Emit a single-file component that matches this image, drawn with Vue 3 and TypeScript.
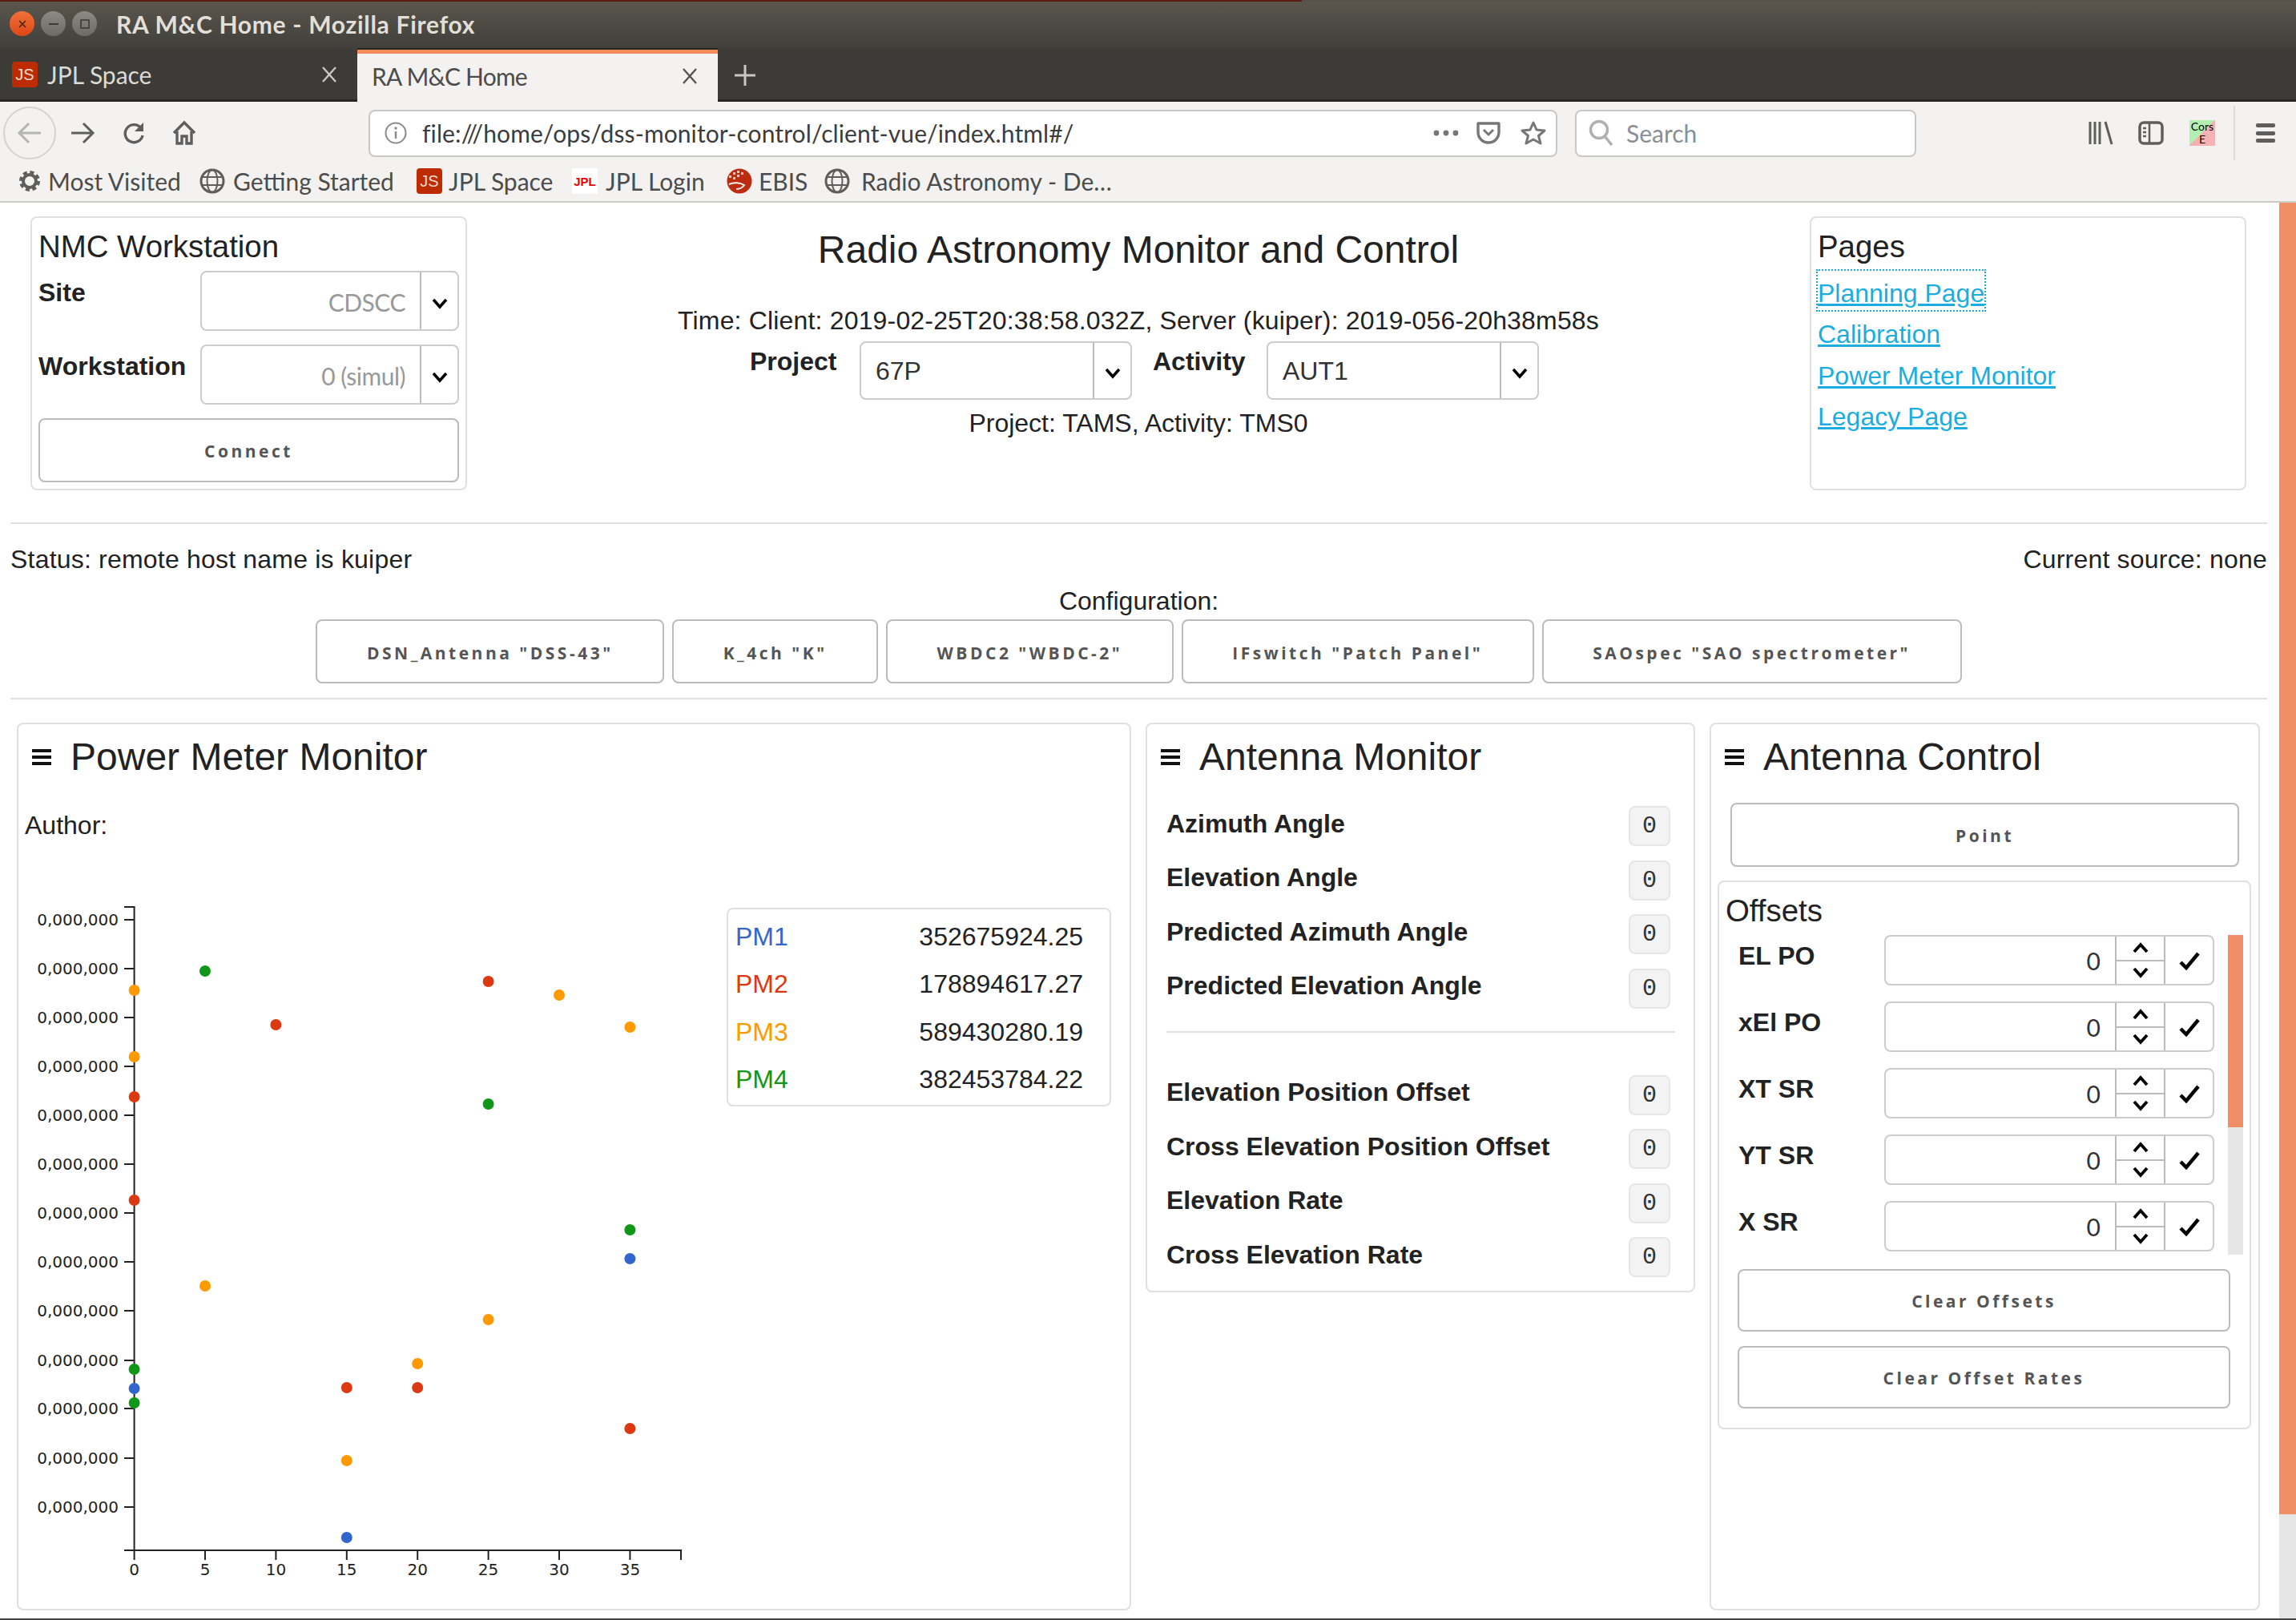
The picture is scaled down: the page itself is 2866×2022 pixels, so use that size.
<script setup lang="ts">
const pages = ['Planning Page', 'Calibration', 'Power Meter Monitor', 'Legacy Page']
const workstationFields = [
  { label: 'Site', value: 'CDSCC' },
  { label: 'Workstation', value: '0 (simul)' },
]
const configs = [
  'DSN_Antenna "DSS-43"',
  'K_4ch "K"',
  'WBDC2 "WBDC-2"',
  'IFswitch "Patch Panel"',
  'SAOspec "SAO spectrometer"',
]
const meters = [
  { name: 'PM1', value: '352675924.25', color: '#3366cc' },
  { name: 'PM2', value: '178894617.27', color: '#dc3912' },
  { name: 'PM3', value: '589430280.19', color: '#ff9900' },
  { name: 'PM4', value: '382453784.22', color: '#109618' },
]
const monitorTop = ['Azimuth Angle', 'Elevation Angle', 'Predicted Azimuth Angle', 'Predicted Elevation Angle']
const monitorBottom = ['Elevation Position Offset', 'Cross Elevation Position Offset', 'Elevation Rate', 'Cross Elevation Rate']
const offsets = ['EL PO', 'xEl PO', 'XT SR', 'YT SR', 'X SR']

// chart is drawn in page coordinates, the svg viewBox shifts them into place
const xPos = (v: number) => 167.6 + v * 17.68
const yTicks = [1148, 1209, 1270, 1331, 1392, 1453, 1514, 1575, 1636, 1698, 1758, 1820, 1881]
const xTicks = [0, 5, 10, 15, 20, 25, 30, 35]
const blue = '#3366cc'
const red = '#dc3912'
const orange = '#ff9900'
const green = '#109618'
const points: [number, number, string][] = [
  [0, 1236, orange], [0, 1319, orange], [0, 1369, red], [0, 1498, red],
  [0, 1709, green], [0, 1733, blue], [0, 1751, green],
  [5, 1212, green], [5, 1605, orange], [10, 1279, red],
  [15, 1732, red], [15, 1823, orange], [15, 1919, blue],
  [20, 1702, orange], [20, 1732, red],
  [25, 1225, red], [25, 1378, green], [25, 1647, orange],
  [30, 1242, orange],
  [35, 1282, orange], [35, 1535, green], [35, 1571, blue], [35, 1783, red],
]
</script>

<template>
  <div class="window">
    <div class="titlebar">
      <span class="wbtn close">
        <svg width="12" height="12" viewBox="0 0 12 12"><path d="M2 2l8 8M10 2l-8 8" stroke="#4a2412" stroke-width="1.6" /></svg>
      </span>
      <span class="wbtn">
        <svg width="14" height="4" viewBox="0 0 14 4"><path d="M1 2h12" stroke="#3c3b37" stroke-width="2" /></svg>
      </span>
      <span class="wbtn">
        <svg width="12" height="12" viewBox="0 0 12 12"><rect x="1" y="1" width="10" height="10" fill="none" stroke="#3c3b37" stroke-width="1.6" /></svg>
      </span>
      <span class="wintitle">RA M&amp;C Home - Mozilla Firefox</span>
    </div>

    <div class="tabs">
      <div class="tab">
        <span class="favicon js">JS</span>
        <span class="tabname">JPL Space</span>
        <svg class="tabx" width="20" height="20" viewBox="0 0 20 20"><path d="M2 1l16 18M18 1L2 19" stroke="#c9c8c4" stroke-width="2.400" /></svg>
      </div>
      <div class="tab active">
        <span class="tabname">RA M&amp;C Home</span>
        <svg class="tabx" width="20" height="20" viewBox="0 0 20 20"><path d="M2 1l16 18M18 1L2 19" stroke="#555" stroke-width="2.400" /></svg>
      </div>
      <svg class="newtab" width="28" height="28" viewBox="0 0 28 28"><path d="M14 1v26M1 14h26" stroke="#c9c8c4" stroke-width="3" /></svg>
    </div>

    <div class="toolbar">
      <span class="backbtn">
        <svg width="32" height="28" viewBox="0 0 32 28"><path d="M30 14H4M15 2L3 14l12 12" fill="none" stroke="#b5b5b5" stroke-width="3" /></svg>
      </span>
      <svg class="forward" width="32" height="28" viewBox="0 0 32 28"><path d="M2 14h26M17 2l12 12-12 12" fill="none" stroke="#5e5e5e" stroke-width="3" /></svg>
      <svg class="reload" width="30" height="30" viewBox="0 0 30 30"><path d="M24 9a11 11 0 1 0 2 9" fill="none" stroke="#5e5e5e" stroke-width="3.400" /><path d="M27 2v11H16z" fill="#5e5e5e" /></svg>
      <svg class="home" width="32" height="32" viewBox="0 0 32 32"><path d="M3 16L16 3l13 13M7 14v15h6v-9h6v9h6V14" fill="none" stroke="#5e5e5e" stroke-width="3.400" /></svg>
      <div class="urlbar">
        <svg width="30" height="30" viewBox="0 0 30 30"><circle cx="15" cy="15" r="12.5" fill="none" stroke="#8a8a8a" stroke-width="2" /><path d="M15 13v9" stroke="#8a8a8a" stroke-width="2.5" /><circle cx="15" cy="9" r="1.7" fill="#8a8a8a" /></svg>
        <span class="url">file:///home/ops/dss-monitor-control/client-vue/index.html#/</span>
        <svg class="dots" width="32" height="8" viewBox="0 0 32 8"><circle cx="4" cy="4" r="3.4" fill="#777" /><circle cx="16" cy="4" r="3.4" fill="#777" /><circle cx="28" cy="4" r="3.4" fill="#777" /></svg>
        <svg class="pocket" width="32" height="30" viewBox="0 0 32 30"><path d="M3 3h26v11a13 13 0 0 1-26 0z" fill="none" stroke="#777" stroke-width="3.4" stroke-linejoin="round" /><path d="M10 11l6 6 6-6" fill="none" stroke="#777" stroke-width="3" /></svg>
        <svg class="star" width="32" height="32" viewBox="0 0 32 32"><path d="M16 3l4 9 10 1-7.500 6.500L25 29l-9-5-9 5 2.500-9.500L2 13l10-1z" fill="none" stroke="#777" stroke-width="3" stroke-linejoin="round" /></svg>
      </div>
      <div class="searchbar">
        <svg width="34" height="34" viewBox="0 0 34 34"><circle cx="14" cy="13" r="10.500" fill="none" stroke="#b0b0b0" stroke-width="3.500" /><path d="M21 21l9 11" stroke="#b0b0b0" stroke-width="3.500" /></svg>
        <span class="searchtext">Search</span>
      </div>
      <svg class="library" width="32" height="30" viewBox="0 0 32 30"><path d="M3 1v28M9 1v28M15 1v28M22 1l8 28" stroke="#5e5e5e" stroke-width="3" fill="none" /></svg>
      <svg class="sidebar" width="32" height="30" viewBox="0 0 32 30"><rect x="2" y="2" width="28" height="26" rx="5" fill="none" stroke="#5e5e5e" stroke-width="3.500" /><path d="M14 2v26M6 9h4M6 14h4M6 19h4" stroke="#5e5e5e" stroke-width="2.500" /></svg>
      <div class="cors"><span>Cors</span><span>E</span></div>
      <span class="tbsep" />
      <span class="burger">
        <i /><i /><i />
      </span>
    </div>

    <div class="bookmarks">
      <div class="bm">
        <svg width="26" height="30" viewBox="0 0 26 26"><circle cx="13" cy="13" r="8" fill="none" stroke="#5e5e5e" stroke-width="4" /><circle cx="13" cy="13" r="11" fill="none" stroke="#5e5e5e" stroke-width="4" stroke-dasharray="5 3.640" /></svg>
        <span>Most Visited</span>
      </div>
      <div class="bm">
        <svg width="32" height="32" viewBox="0 0 32 32"><circle cx="16" cy="16" r="14" fill="none" stroke="#5e5e5e" stroke-width="3" /><ellipse cx="16" cy="16" rx="6.500" ry="14" fill="none" stroke="#5e5e5e" stroke-width="2" /><path d="M2 11h28M2 21h28" stroke="#5e5e5e" stroke-width="2" /></svg>
        <span>Getting Started</span>
      </div>
      <div class="bm">
        <span class="favicon js">JS</span>
        <span class="bmjs">JPL Space</span>
      </div>
      <div class="bm">
        <span class="favicon jpl">JPL</span>
        <span>JPL Login</span>
      </div>
      <div class="bm">
        <svg width="32" height="32" viewBox="0 0 32 32"><circle cx="16" cy="16" r="15.500" fill="#bb2c10" /><path d="M3 9h3v3H3zM8 5h3v3H8zM13 3h3v3h-3zM8 11h3v3H8zM13 8h3v3h-3zM18 5h3v3h-3z" fill="#efc4b8" /><path d="M3 20c6-3 14-2 19 1-2 3-6 5-10 5" fill="none" stroke="#f3f2f0" stroke-width="2" /></svg>
        <span class="bmebis">EBIS</span>
      </div>
      <div class="bm">
        <svg width="32" height="32" viewBox="0 0 32 32"><circle cx="16" cy="16" r="14" fill="none" stroke="#5e5e5e" stroke-width="3" /><ellipse cx="16" cy="16" rx="6.500" ry="14" fill="none" stroke="#5e5e5e" stroke-width="2" /><path d="M2 11h28M2 21h28" stroke="#5e5e5e" stroke-width="2" /></svg>
        <span class="bmlast">Radio Astronomy - De…</span>
      </div>
    </div>

    <div class="page">
      <div class="content">
        <div class="toprow">
          <div class="card nmc">
            <h4 class="cardhead">NMC Workstation</h4>
            <div v-for="f in workstationFields" :key="f.label" class="field">
              <label>{{ f.label }}</label>
              <div class="select">
                <span class="selectval right">{{ f.value }}</span>
                <span class="selectarrow">
                  <svg width="20" height="14" viewBox="0 0 20 14"><path d="M2 2l8 9 8-9" fill="none" stroke="#000" stroke-width="3.500" /></svg>
                </span>
              </div>
            </div>
            <button class="btn connect">Connect</button>
          </div>

          <div class="center">
            <h2 class="maintitle">Radio Astronomy Monitor and Control</h2>
            <p class="timeline">Time: Client: 2019-02-25T20:38:58.032Z, Server (kuiper): 2019-056-20h38m58s</p>
            <div class="projrow">
              <label class="projlabel">Project</label>
              <div class="select proj">
                <span class="selectval">67P</span>
                <span class="selectarrow">
                  <svg width="20" height="14" viewBox="0 0 20 14"><path d="M2 2l8 9 8-9" fill="none" stroke="#000" stroke-width="3.500" /></svg>
                </span>
              </div>
              <label class="projlabel act">Activity</label>
              <div class="select proj">
                <span class="selectval">AUT1</span>
                <span class="selectarrow">
                  <svg width="20" height="14" viewBox="0 0 20 14"><path d="M2 2l8 9 8-9" fill="none" stroke="#000" stroke-width="3.500" /></svg>
                </span>
              </div>
            </div>
            <p class="projline">Project: TAMS, Activity: TMS0</p>
          </div>

          <div class="card pages">
            <h4 class="cardhead">Pages</h4>
            <div v-for="(p, i) in pages" :key="p" class="linkrow">
              <a href="#" :class="{ focused: i === 0 }">{{ p }}</a>
            </div>
          </div>
        </div>

        <div class="rule" />

        <div class="statusrow">
          <span>Status: remote host name is kuiper</span>
          <span>Current source: none</span>
        </div>
        <div class="configlabel">Configuration:</div>
        <div class="configrow">
          <button v-for="c in configs" :key="c" class="btn cfg">{{ c }}</button>
        </div>

        <div class="rule second" />

        <div class="panels">
          <section class="card panel power">
            <header class="panelhead">
              <span class="ham"><i /><i /><i /></span>
              <h3>Power Meter Monitor</h3>
            </header>
            <div class="author">Author:</div>
            <div class="chartrow">
              <svg class="chart" width="880" height="870" viewBox="23 1120 880 870">
                <path d="M155 1132H167.600V1935M155 1935H850V1947" fill="none" stroke="#222" stroke-width="2" />
                <g v-for="t in yTicks" :key="t">
                  <path :d="`M155 ${t}H167`" stroke="#222" stroke-width="2" />
                  <text class="tick" x="148" :y="t + 7" text-anchor="end">0,000,000</text>
                </g>
                <g v-for="t in xTicks" :key="t">
                  <path :d="`M${xPos(t)} 1935V1947`" stroke="#222" stroke-width="2" />
                  <text class="tick" :x="xPos(t)" y="1966" text-anchor="middle">{{ t }}</text>
                </g>
                <circle v-for="(p, i) in points" :key="i" :cx="xPos(p[0])" :cy="p[1]" r="7" :fill="p[2]" />
              </svg>
              <div class="card legend">
                <div v-for="m in meters" :key="m.name" class="legendrow">
                  <span :style="{ color: m.color }">{{ m.name }}</span>
                  <span>{{ m.value }}</span>
                </div>
              </div>
            </div>
          </section>

          <section class="card panel monitor">
            <header class="panelhead">
              <span class="ham"><i /><i /><i /></span>
              <h3>Antenna Monitor</h3>
            </header>
            <div class="monlist">
              <div v-for="m in monitorTop" :key="m" class="monrow">
                <strong>{{ m }}</strong>
                <code>0</code>
              </div>
            </div>
            <div class="monrule" />
            <div class="monlist">
              <div v-for="m in monitorBottom" :key="m" class="monrow">
                <strong>{{ m }}</strong>
                <code>0</code>
              </div>
            </div>
          </section>

          <section class="card panel control">
            <header class="panelhead">
              <span class="ham"><i /><i /><i /></span>
              <h3>Antenna Control</h3>
            </header>
            <button class="btn point">Point</button>
            <div class="card offsets">
              <h4 class="cardhead">Offsets</h4>
              <div class="offsetscroll">
                <div class="offsetlist">
                  <div v-for="o in offsets" :key="o" class="offsetrow">
                    <label>{{ o }}</label>
                    <div class="spin">
                      <span class="spinval">0</span>
                      <span class="spinbtns">
                        <span>
                          <svg width="20" height="14" viewBox="0 0 20 14"><path d="M2 12l8-9 8 9" fill="none" stroke="#000" stroke-width="3.800" /></svg>
                        </span>
                        <span>
                          <svg width="20" height="14" viewBox="0 0 20 14"><path d="M2 2l8 9 8-9" fill="none" stroke="#000" stroke-width="3.800" /></svg>
                        </span>
                      </span>
                      <span class="spincheck">
                        <svg width="26" height="24" viewBox="0 0 26 24"><path d="M2 14l7 7L24 3" fill="none" stroke="#000" stroke-width="4.500" /></svg>
                      </span>
                    </div>
                  </div>
                </div>
                <div class="innerbar"><div class="innerthumb" /></div>
              </div>
              <button class="btn clear">Clear Offsets</button>
              <button class="btn clear">Clear Offset Rates</button>
            </div>
          </section>
        </div>
      </div>
      <div class="pagebar"><div class="pagethumb" /></div>
    </div>
  </div>
</template>

<style>
html, body { margin: 0; background: #fff; }
</style>

<style scoped>
.window {
  width: 2866px;
  height: 2022px;
  overflow: hidden;
  font-family: "Liberation Sans", Arial, sans-serif;
  font-size: 32px;
  color: #222;
  background: #3c3b37;
  display: flex;
  flex-direction: column;
}
.titlebar {
  height: 62px;
  flex: none;
  display: flex;
  align-items: center;
  padding: 0 0 3px 12px;
  box-sizing: border-box;
  background:
    linear-gradient(to right, #5c1a14 1625px, #55534b 1625px) 0 0 / 100% 2px no-repeat,
    linear-gradient(#5b574e, #3f3e39);
  font-family: Lato, "Noto Sans", sans-serif;
}
.wbtn {
  width: 31px;
  height: 31px;
  border-radius: 50%;
  margin-right: 8px;
  background: linear-gradient(#8b8a83, #6c6b64);
  display: flex;
  align-items: center;
  justify-content: center;
}
.wbtn.close { background: linear-gradient(#f2703a, #dd4814); }
.wintitle {
  margin-left: 16px;
  font-weight: 700;
  font-size: 30px;
  letter-spacing: 0.700px;
  color: #e2dfd9;
}
.tabs {
  height: 65px;
  flex: none;
  display: flex;
  box-sizing: border-box;
  border-bottom: 3px solid #262522;
  font-family: Lato, "Noto Sans", sans-serif;
}
.tab {
  width: 446px;
  display: flex;
  align-items: center;
  padding: 0 25px 0 15px;
  box-sizing: border-box;
  font-size: 30px;
  color: #dcdad5;
}
.tab.active {
  width: 450px;
  height: 65px;
  padding: 0 25px 5px 18px;
  background: #f3f2f0;
  border-top: 5px solid #f28a5c;
  color: #4c4c4c;
  letter-spacing: -0.800px;
  box-shadow: 0 -2px 0 #262522;
  z-index: 1;
}
.tabname { flex: 1; margin-left: 12px; }
.tab.active .tabname { margin-left: 0; }
.newtab { margin: 18px 0 0 20px; }
.favicon {
  width: 32px;
  height: 32px;
  flex: none;
  display: flex;
  align-items: center;
  justify-content: center;
}
.favicon.js {
  background: #bd2c00;
  border-radius: 4px;
  color: #f3d9cf;
  font: 20px "Liberation Sans", sans-serif;
}
.favicon.jpl {
  background: #fff;
  color: #f00000;
  font: 700 15px "Liberation Sans", sans-serif;
}
.toolbar {
  height: 78px;
  flex: none;
  display: flex;
  align-items: center;
  box-sizing: border-box;
  background: #f3f2f0;
  font-family: Lato, "Noto Sans", sans-serif;
}
.backbtn {
  width: 66px;
  height: 66px;
  margin-left: 4px;
  border: 2px solid #d4d3d0;
  border-radius: 50%;
  box-sizing: border-box;
  display: flex;
  align-items: center;
  justify-content: center;
}
.forward { margin-left: 17px; }
.reload { margin-left: 33px; }
.home { margin-left: 32px; }
.urlbar {
  margin-left: 214px;
  width: 1484px;
  height: 59px;
  box-sizing: border-box;
  background: #fff;
  border: 2px solid #c9c8c4;
  border-radius: 8px;
  display: flex;
  align-items: center;
  padding: 0 12px 0 17px;
}
.url {
  flex: 1;
  margin-left: 18px;
  font-size: 30px;
  letter-spacing: 0.100px;
  color: #3c3c3c;
}
.pocket { margin-left: 21px; }
.star { margin-left: 24px; }
.searchbar {
  margin-left: 22px;
  width: 426px;
  height: 59px;
  box-sizing: border-box;
  background: #fff;
  border: 2px solid #c9c8c4;
  border-radius: 8px;
  display: flex;
  align-items: center;
  padding-left: 14px;
}
.searchtext {
  margin-left: 14px;
  font-size: 30px;
  color: #8a8f96;
}
.library { margin-left: 214px; }
.sidebar { margin-left: 31px; }
.cors {
  margin-left: 32px;
  width: 32px;
  height: 32px;
  display: flex;
  flex-direction: column;
  align-items: center;
  font-size: 14px;
  line-height: 16px;
  color: #000;
  background: linear-gradient(135deg, #b2f0b2 50%, #f6b2b2 50%);
}
.tbsep {
  margin-left: 23px;
  width: 2px;
  height: 68px;
  background: #dcdbd8;
}
.burger {
  margin-left: 26px;
  width: 24px;
  display: flex;
  flex-direction: column;
  gap: 4.500px;
}
.burger i {
  height: 5px;
  border-radius: 2px;
  background: #5e5e5e;
}
.bookmarks {
  height: 48px;
  flex: none;
  box-sizing: border-box;
  padding: 0 0 4px 24px;
  background: #f3f2f0;
  border-bottom: 2px solid #cccbc8;
  display: grid;
  grid-template-columns: 225px 271px 194px 193px 122px auto;
  align-items: center;
  font-family: Lato, "Noto Sans", sans-serif;
  font-size: 30px;
  color: #4c4c4c;
}
.bm {
  display: flex;
  align-items: center;
  gap: 10px;
  white-space: nowrap;
}
.bmjs { margin-left: -2px; }
.bmebis { margin-left: -2px; }
.bmlast { margin-left: 4px; }

.page {
  flex: 1;
  min-height: 0;
  display: flex;
  background: #fff;
  border-bottom: 2px solid #444;
}
.content {
  width: 2845px;
  box-sizing: border-box;
  padding: 17px 15px 0 13px;
}
.pagebar {
  width: 21px;
  background: #e6e6e6;
}
.pagethumb {
  height: 1637px;
  background: #f08e65;
}
.card {
  border: 2px solid #e0e0e0;
  border-radius: 8px;
  box-sizing: border-box;
  background: #fff;
}
h4.cardhead {
  margin: 13px 0 0;
  font-size: 38.400px;
  font-weight: 400;
  line-height: 46px;
}
.toprow {
  display: flex;
  height: 382px;
}
.nmc {
  width: 545px;
  height: 342px;
  margin-left: 25px;
  padding: 0 8px;
}
.field {
  display: grid;
  grid-template-columns: 202px 323px;
  margin-top: 17px;
}
.cardhead + .field { margin-top: 7px; }
.field label {
  font-weight: 700;
  line-height: 54px;
}
.select {
  height: 75px;
  box-sizing: border-box;
  border: 2px solid #ccc;
  border-radius: 8px;
  display: flex;
  align-items: stretch;
}
.selectval {
  flex: 1;
  display: flex;
  align-items: center;
  padding: 2px 18px 0;
  color: #333;
}
.selectval.right {
  justify-content: flex-end;
  font-family: Lato, "Noto Sans", sans-serif;
  font-size: 30px;
  letter-spacing: -0.500px;
  color: #999;
}
.selectarrow {
  width: 47px;
  flex: none;
  border-left: 2px solid #bbb;
  display: flex;
  align-items: center;
  justify-content: center;
  padding-top: 6px;
  box-sizing: border-box;
}
.btn {
  display: block;
  box-sizing: border-box;
  height: 80px;
  padding-top: 3px;
  background: #fff;
  border: 2px solid #bbb;
  border-radius: 8px;
  font-family: "Open Sans", "Noto Sans", sans-serif;
  font-weight: 700;
  font-size: 21px;
  letter-spacing: 3.500px;
  color: #555;
}
.connect {
  width: 525px;
  margin-top: 17px;
}
.center {
  flex: 1;
  text-align: center;
}
.maintitle {
  margin: 12px 0 0;
  font-size: 48px;
  font-weight: 400;
  line-height: 60px;
}
.timeline {
  margin: 38px 0 0;
  line-height: 40px;
  letter-spacing: 0.170px;
}
.projrow {
  display: flex;
  justify-content: center;
  margin-top: 6px;
  padding-left: 15px;
}
.projlabel {
  width: 137px;
  text-align: left;
  font-weight: 700;
  line-height: 50px;
}
.projlabel.act {
  width: 142px;
  margin-left: 26px;
}
.select.proj {
  width: 340px;
  height: 73px;
}
.projline {
  margin: 9px 0 0;
  line-height: 40px;
}
.pages {
  width: 545px;
  height: 342px;
  margin-right: 26px;
  padding: 0 8px;
}
.linkrow {
  height: 49px;
  margin-top: 2.300px;
  line-height: 56px;
}
.cardhead + .linkrow { margin-top: 7px; }
.linkrow a {
  color: #1cade0;
  text-decoration: underline;
}
.linkrow a.focused {
  display: inline-block;
  height: 49px;
  outline: 2px dotted #1cade0;
}
.rule {
  height: 2px;
  background: #e0e0e0;
}
.rule.second { margin-top: 18px; }
.statusrow {
  display: flex;
  justify-content: space-between;
  margin-top: 24px;
  line-height: 40px;
  letter-spacing: 0.200px;
}
.configlabel {
  margin-top: 12px;
  text-align: center;
  line-height: 40px;
}
.configrow {
  display: flex;
  justify-content: center;
  gap: 10px;
  margin-top: 3px;
}
.cfg {
  padding: 3px 61.500px 0;
}
.panels {
  display: flex;
  align-items: flex-start;
  gap: 18px;
  margin: 29px 9px 0 8px;
}
.panel {
  height: 1108px;
}
.panelhead {
  display: flex;
  align-items: center;
  gap: 24px;
  height: 56px;
  margin-top: 13px;
  padding-left: 17px;
}
.panelhead h3 {
  margin: 0;
  font-size: 48px;
  font-weight: 400;
  line-height: 56px;
}
.ham {
  width: 24px;
  display: flex;
  flex-direction: column;
  gap: 4px;
}
.ham i {
  height: 4px;
  background: #111;
}
.power {
  width: 1391px;
}
.author {
  margin: 37px 0 0 8px;
  line-height: 40px;
}
.chartrow {
  display: flex;
  align-items: flex-start;
  margin-top: 70px;
}
.chart {
  flex: none;
}
.tick {
  font-family: "DejaVu Sans", sans-serif;
  font-size: 20px;
  fill: #222;
}
.legend {
  width: 480px;
  height: 248px;
  margin: 13px 0 0 4px;
  padding: 5px 33px 0 9px;
}
.legendrow {
  display: flex;
  justify-content: space-between;
  align-items: center;
  height: 59.300px;
}
.monitor {
  width: 686px;
  height: 711px;
  padding: 0 29px 0 24px;
}
.monitor .panelhead { padding-left: 0; margin-left: -7px; }
.monlist {
  display: flex;
  flex-direction: column;
  gap: 17.500px;
  margin-top: 33px;
}
.monrow {
  display: flex;
  justify-content: space-between;
  align-items: center;
  height: 50px;
}
.monrow strong {
  margin-top: -6px;
}
.monrow code {
  width: 52px;
  height: 50px;
  box-sizing: border-box;
  background: #f3f3f3;
  border: 2px solid #e6e6e6;
  border-radius: 8px;
  display: flex;
  align-items: center;
  justify-content: center;
  font-family: "Liberation Mono", monospace;
  font-size: 30px;
  color: #333;
}
.monrule {
  height: 2px;
  margin: 28px -6px 53px 0;
  background: #e0e0e0;
}
.monrule + .monlist { margin-top: 0; }
.control {
  width: 687px;
}
.point {
  width: 635px;
  height: 80px;
  margin: 29px 0 0 24px;
}
.offsets {
  width: 666px;
  height: 685px;
  margin: 17px 0 0 8px;
  padding: 0 8px;
}
.offsetscroll {
  display: flex;
  margin-top: 7px;
  height: 399px;
}
.offsetlist {
  display: flex;
  flex-direction: column;
  gap: 20px;
  margin-left: 16px;
}
.offsetrow {
  display: grid;
  grid-template-columns: 182px 412px;
  height: 63px;
}
.offsetrow label {
  font-weight: 700;
  line-height: 52px;
}
.spin {
  box-sizing: border-box;
  height: 63px;
  border: 2px solid #ccc;
  border-radius: 8px;
  display: flex;
}
.spinval {
  flex: 1;
  display: flex;
  align-items: center;
  justify-content: flex-end;
  padding-right: 18px;
  font-family: Lato, "Noto Sans", sans-serif;
  font-size: 30px;
  color: #333;
}
.spinbtns {
  width: 61px;
  flex: none;
  box-sizing: border-box;
  border-left: 2px solid #bbb;
  display: flex;
  flex-direction: column;
}
.spinbtns span {
  flex: 1;
  display: flex;
  align-items: center;
  justify-content: center;
}
.spinbtns span + span {
  border-top: 2px solid #bbb;
}
.spincheck {
  width: 61px;
  flex: none;
  box-sizing: border-box;
  border-left: 2px solid #bbb;
  display: flex;
  align-items: center;
  justify-content: center;
}
.innerbar {
  width: 20px;
  margin-left: 17px;
  background: #e6e6e6;
}
.innerthumb {
  height: 240px;
  background: #f08e65;
}
.clear {
  width: 615px;
  height: 78px;
  margin: 18px 0 0 15px;
}
</style>
